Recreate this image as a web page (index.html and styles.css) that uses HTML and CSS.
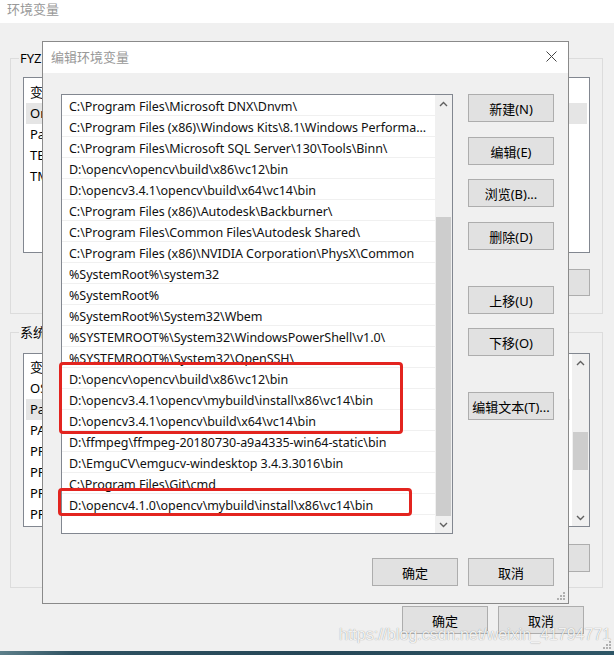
FILE: index.html
```html
<!DOCTYPE html>
<html lang="zh-CN">
<head>
<meta charset="utf-8">
<title>环境变量</title>
<link rel="stylesheet" href="styles.css">
</head>
<body>
<div class="bgwin">
  <div class="bg-title">环境变量</div>

  <div class="group group1">
    <div class="legend">FYZ 的用户变量(U)</div>
    <div class="bglist bglist1">
      <div class="bgrow bghead">变量</div>
      <div class="bgrow sel">OneDrive</div>
      <div class="bgrow">Path</div>
      <div class="bgrow">TEMP</div>
      <div class="bgrow">TMP</div>
    </div>
    <div class="bgbtns">
      <div class="btn bgbtn"></div>
      <div class="btn bgbtn"></div>
      <div class="btn bgbtn"></div>
    </div>
  </div>

  <div class="group group2">
    <div class="legend">系统变量(S)</div>
    <div class="bglist bglist2">
      <div class="bgrows">
        <div class="bgrow bghead">变量</div>
        <div class="bgrow">OS</div>
        <div class="bgrow sel">Path</div>
        <div class="bgrow">PATHEXT</div>
        <div class="bgrow">PROCESSOR_ARCHITECTURE</div>
        <div class="bgrow">PROCESSOR_IDENTIFIER</div>
        <div class="bgrow">PROCESSOR_LEVEL</div>
        <div class="bgrow">PROCESSOR_REVISION</div>
      </div>
      <div class="vscroll bgscroll">
        <div class="sbtn"><svg width="9" height="6" viewBox="0 0 9 6"><path d="M1 5 L4.5 1.5 L8 5" fill="none" stroke="#606060" stroke-width="1.4"/></svg></div>
        <div class="track bgtrack1"></div>
        <div class="thumb bgthumb"></div>
        <div class="track"></div>
        <div class="sbtn"><svg width="9" height="6" viewBox="0 0 9 6"><path d="M1 1 L4.5 4.5 L8 1" fill="none" stroke="#606060" stroke-width="1.4"/></svg></div>
      </div>
    </div>
    <div class="bgbtns bgbtns2">
      <div class="btn bgbtn bgbtn2"></div>
      <div class="btn bgbtn bgbtn2"></div>
      <div class="btn bgbtn bgbtn2"></div>
    </div>
  </div>

  <div class="bgfoot">
    <div class="btn footbtn">确定</div>
    <div class="btn footbtn">取消</div>
  </div>
  <div class="taskbar"></div>

  <div class="dialog">
    <div class="dlg-title">
      <span class="dlg-title-text">编辑环境变量</span>
      <svg class="close" width="11" height="11" viewBox="0 0 11 11"><path d="M0.5 0.5 L10.5 10.5 M10.5 0.5 L0.5 10.5" stroke="#444" stroke-width="1"/></svg>
    </div>
    <div class="dlg-body">
      <div class="dlg-main">
        <div class="listwrap">
          <div class="plist">
            <div class="prows">
              <div class="prow">C:\Program Files\Microsoft DNX\Dnvm\</div>
              <div class="prow">C:\Program Files (x86)\Windows Kits\8.1\Windows Performa...</div>
              <div class="prow">C:\Program Files\Microsoft SQL Server\130\Tools\Binn\</div>
              <div class="prow">D:\opencv\opencv\build\x86\vc12\bin</div>
              <div class="prow">D:\opencv3.4.1\opencv\build\x64\vc14\bin</div>
              <div class="prow">C:\Program Files (x86)\Autodesk\Backburner\</div>
              <div class="prow">C:\Program Files\Common Files\Autodesk Shared\</div>
              <div class="prow">C:\Program Files (x86)\NVIDIA Corporation\PhysX\Common</div>
              <div class="prow">%SystemRoot%\system32</div>
              <div class="prow">%SystemRoot%</div>
              <div class="prow">%SystemRoot%\System32\Wbem</div>
              <div class="prow">%SYSTEMROOT%\System32\WindowsPowerShell\v1.0\</div>
              <div class="prow">%SYSTEMROOT%\System32\OpenSSH\</div>
              <div class="prow">D:\opencv\opencv\build\x86\vc12\bin</div>
              <div class="prow">D:\opencv3.4.1\opencv\mybuild\install\x86\vc14\bin</div>
              <div class="prow">D:\opencv3.4.1\opencv\build\x64\vc14\bin</div>
              <div class="prow">D:\ffmpeg\ffmpeg-20180730-a9a4335-win64-static\bin</div>
              <div class="prow">D:\EmguCV\emgucv-windesktop 3.4.3.3016\bin</div>
              <div class="prow">C:\Program Files\Git\cmd</div>
              <div class="prow">D:\opencv4.1.0\opencv\mybuild\install\x86\vc14\bin</div>
            </div>
            <div class="vscroll">
              <div class="sbtn"><svg width="9" height="6" viewBox="0 0 9 6"><path d="M1 5 L4.5 1.5 L8 5" fill="none" stroke="#606060" stroke-width="1.4"/></svg></div>
              <div class="track dtrack"></div>
              <div class="thumb dthumb"></div>
              <div class="sbtn"><svg width="9" height="6" viewBox="0 0 9 6"><path d="M1 1 L4.5 4.5 L8 1" fill="none" stroke="#606060" stroke-width="1.4"/></svg></div>
            </div>
          </div>
          <div class="mark mark1"></div>
          <div class="mark mark2"></div>
        </div>
        <div class="sidebtns">
          <div class="btn sbt">新建(N)</div>
          <div class="btn sbt g43">编辑(E)</div>
          <div class="btn sbt g42">浏览(B)...</div>
          <div class="btn sbt g43">删除(D)</div>
          <div class="btn sbt g64">上移(U)</div>
          <div class="btn sbt g42">下移(O)</div>
          <div class="btn sbt g64">编辑文本(T)...</div>
        </div>
      </div>
      <div class="dlg-foot">
        <div class="btn footbtn">确定</div>
        <div class="btn footbtn">取消</div>
      </div>
      <svg class="grip" width="8" height="8" viewBox="0 0 8 8"><g fill="#b0b0b0"><rect x="6" y="0" width="2" height="2"/><rect x="3" y="3" width="2" height="2"/><rect x="6" y="3" width="2" height="2"/><rect x="0" y="6" width="2" height="2"/><rect x="3" y="6" width="2" height="2"/><rect x="6" y="6" width="2" height="2"/></g></svg>
    </div>
  </div>

  <svg class="grip biggrip" width="8" height="8" viewBox="0 0 8 8"><g fill="#b0b0b0"><rect x="6" y="0" width="2" height="2"/><rect x="3" y="3" width="2" height="2"/><rect x="6" y="3" width="2" height="2"/><rect x="0" y="6" width="2" height="2"/><rect x="3" y="6" width="2" height="2"/><rect x="6" y="6" width="2" height="2"/></g></svg>
  <div class="watermark">https://blog.csdn.net/weixin_41794771</div>
</div>
</body>
</html>
```

FILE: styles.css
```css
* { box-sizing: border-box; }
html, body { margin: 0; padding: 0; }
body {
  width: 614px;
  height: 655px;
  overflow: hidden;
  background: #f0f0f0;
  font-family: "Noto Sans", "Noto Sans CJK SC", sans-serif;
  font-size: 13px;
  color: #000;
}
.bgwin {
  position: relative;
  width: 614px;
  height: 655px;
  overflow: hidden;
  background: #f0f0f0;
}
.bg-title {
  height: 23px;
  background: #fff;
  color: #999;
  padding-left: 7px;
  line-height: 17px;
  font-family: "Noto Sans CJK SC", sans-serif;
}
.group {
  margin-left: 10px;
  width: 593px;
  border: 1px solid #dcdcdc;
}
.group1 { margin-top: 35px; padding-bottom: 17px; }
.group2 { margin-top: 18px; padding-bottom: 15px; }
.legend {
  width: max-content;
  white-space: nowrap;
  margin: -10px 0 0 8px;
  padding: 0 1px;
  background: #f0f0f0;
  line-height: 18px;
  font-family: "Noto Sans", "Noto Sans CJK SC", sans-serif;
}
.bglist {
  margin: 10px 12px 0 12px;
  background: #fff;
  border: 1px solid #828790;
}
.bglist1 { height: 176px; padding-top: 4px; }
.bglist2 { height: 174px; margin-top: 12px; display: flex; }
.bgrows { flex: 1; padding-top: 3px; }
.bgrow {
  height: 21px;
  line-height: 21px;
  padding-left: 6px;
  white-space: nowrap;
}
.bgrow.sel { background: #e5e5e5; margin: 0 2px; padding-left: 4px; }
.bgbtns {
  display: flex;
  justify-content: flex-end;
  gap: 10px;
  margin: 16px 12px 0 0;
}
.bgbtns2 { margin-top: 17px; }
.bgbtn { width: 86px; height: 27px; }
.bgbtn2 { height: 28px; }
.bgfoot {
  display: flex;
  justify-content: flex-end;
  gap: 10px;
  margin: 18px 30px 0 0;
}
.taskbar {
  margin-top: 17px;
  height: 6px;
  background: linear-gradient(90deg, #5d7f8a 0%, #2f5262 12%, #264757 50%, #2e5666 100%);
}

.btn {
  display: flex;
  align-items: center;
  justify-content: center;
  background: #e1e1e1;
  border: 1px solid #adadad;
  font-family: "Noto Sans", "Noto Sans CJK SC", sans-serif;
  font-size: 13px;
  color: #000;
  white-space: nowrap;
}
.footbtn { width: 86px; height: 28px; }

.vscroll {
  width: 17px;
  display: flex;
  flex-direction: column;
  background: #f0f0f0;
  flex: none;
}
.sbtn {
  height: 17px;
  display: flex;
  align-items: center;
  justify-content: center;
  flex: none;
}
.track { flex: 1; }
.thumb { background: #cdcdcd; margin: 0 1px; flex: none; }
.bgtrack1 { flex: none; height: 61px; }
.bgthumb { height: 38px; }

/* dialog (window over the background window) */
.dialog {
  position: absolute;
  left: 42px;
  top: 41px;
  width: 527px;
  height: 563px;
  border: 1px solid #8a8a8a;
  background: #f0f0f0;
  display: flex;
  flex-direction: column;
}
.dlg-title {
  height: 31px;
  background: #fff;
  display: flex;
  align-items: center;
  justify-content: space-between;
  padding: 0 11px 2px 8px;
  flex: none;
}
.dlg-title-text {
  color: #999;
  font-family: "Noto Sans CJK SC", sans-serif;
  font-size: 13px;
}
.close { display: block; }
.dlg-body {
  position: relative;
  flex: 1;
  padding: 21px 14px 0 18px;
}
.dlg-main { display: flex; }
.listwrap { position: relative; flex: none; }
.plist {
  width: 392px;
  height: 440px;
  border: 1px solid #828790;
  background: #fff;
  display: flex;
}
.prows { flex: 1; overflow: hidden; min-width: 0; }
.prow {
  height: 21px;
  line-height: 21px;
  padding-top: 1px;
  border-bottom: 1px solid #f0f0f0;
  padding-left: 7px;
  white-space: nowrap;
  overflow: hidden;
  color: #111;
  font-size: 12.5px;
  letter-spacing: -0.05px;
}
.dtrack { flex: none; height: 105px; }
.dthumb { height: 299px; }
.mark {
  position: absolute;
  border: 3px solid #e3241f;
  border-radius: 4px;
}
.mark1 { left: -2px; top: 268px; width: 344px; height: 72px; }
.mark2 { left: -3px; top: 394px; width: 354px; height: 28px; }

.sidebtns {
  display: flex;
  flex-direction: column;
  margin-left: 15px;
}
.sbt { width: 86px; height: 28px; }
.g43 { margin-top: 15px; }
.g42 { margin-top: 14px; }
.g64 { margin-top: 36px; }
.dlg-foot {
  display: flex;
  justify-content: flex-end;
  gap: 10px;
  margin-top: 24px;
}
.grip {
  position: absolute;
  right: 3px;
  bottom: 3px;
}
.biggrip { right: 3px; bottom: 6px; }
.watermark {
  position: absolute;
  left: 339px;
  top: 626px;
  font-family: "Liberation Sans", sans-serif;
  font-size: 16px;
  color: rgba(255, 255, 255, 0.9);
  text-shadow: 0 0 1px rgba(0, 0, 0, 0.45);
  white-space: nowrap;
}
```
